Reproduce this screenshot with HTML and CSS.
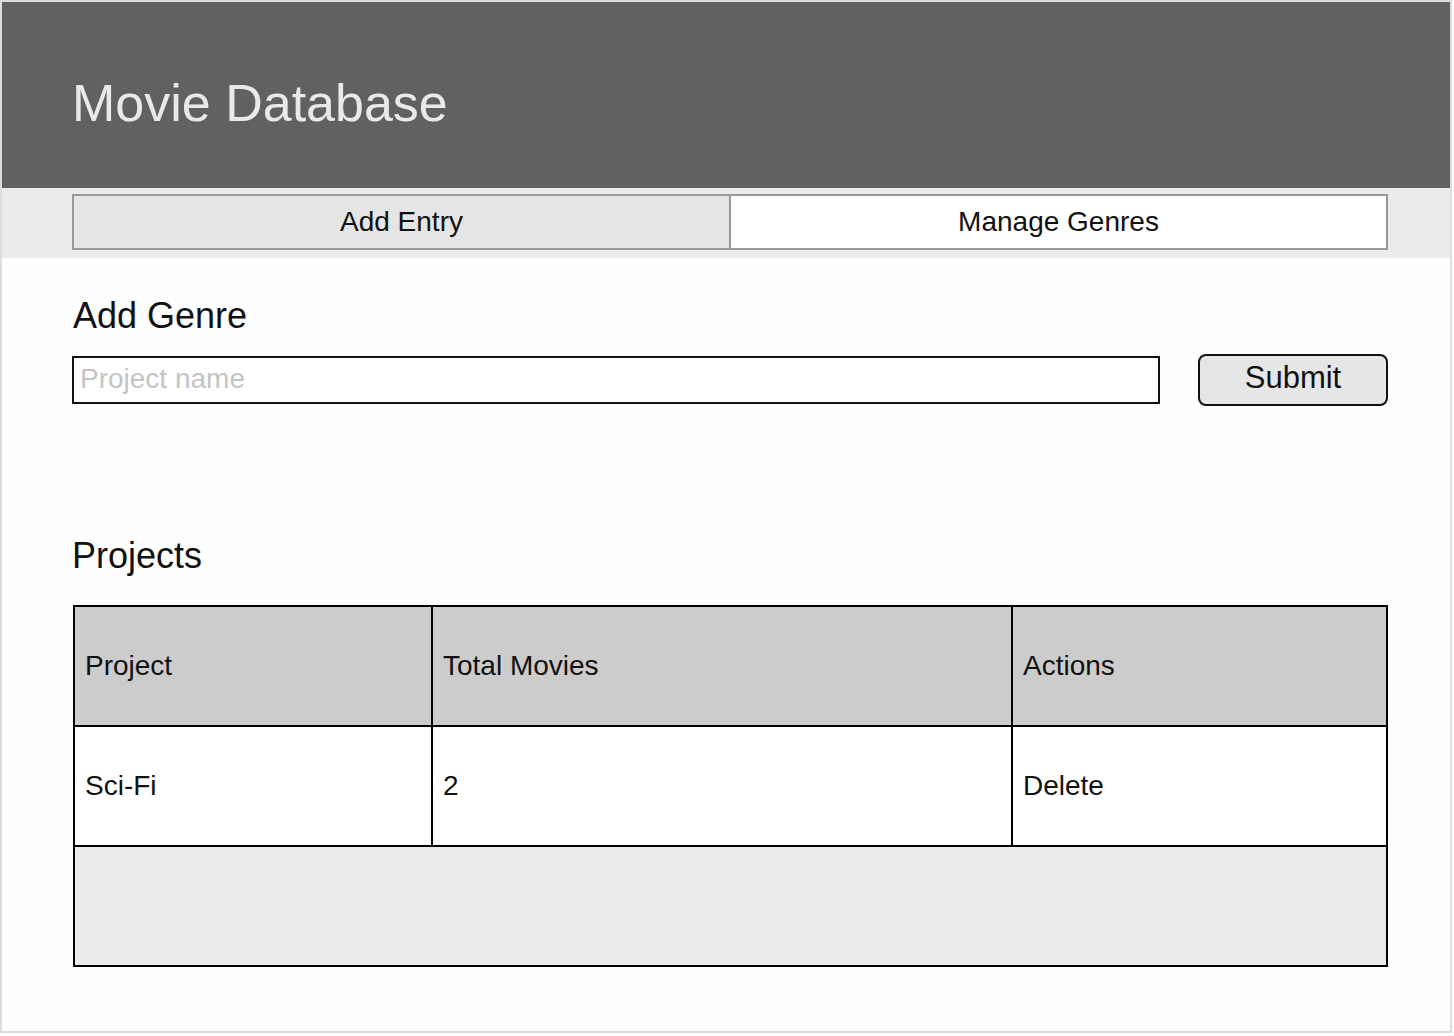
FILE: index.html
```html
<!DOCTYPE html>
<html lang="en">
<head>
<meta charset="utf-8">
<title>Movie Database</title>
<link rel="stylesheet" href="styles.css">
</head>
<body>
<div class="frame">
  <header class="header">
    <h1 class="title">Movie Database</h1>
  </header>
  <nav class="nav">
    <div class="tabs">
      <div class="tab tab-inactive">Add Entry</div>
      <div class="tab tab-active">Manage Genres</div>
    </div>
  </nav>
  <main class="content">
    <h2 class="section-title first">Add Genre</h2>
    <div class="form-row">
      <input class="text-input" type="text" placeholder="Project name">
      <button class="submit-btn" type="button">Submit</button>
    </div>
    <h2 class="section-title second">Projects</h2>
    <table class="grid">
      <colgroup>
        <col class="c1">
        <col class="c2">
        <col class="c3">
      </colgroup>
      <thead>
        <tr class="head-row">
          <th class="cell">Project</th>
          <th class="cell">Total Movies</th>
          <th class="cell last">Actions</th>
        </tr>
      </thead>
      <tbody>
        <tr class="body-row">
          <td class="cell">Sci-Fi</td>
          <td class="cell">2</td>
          <td class="cell last">Delete</td>
        </tr>
        <tr class="empty-row">
          <td class="empty-cell" colspan="3"></td>
        </tr>
      </tbody>
    </table>
  </main>
</div>
</body>
</html>
```

FILE: styles.css
```css
html, body {
  margin: 0;
  padding: 0;
  background: #ffffff;
}

body {
  font-family: "Liberation Sans", Arial, Helvetica, sans-serif;
  color: #111111;
}

.frame {
  width: 1452px;
  height: 1033px;
  box-sizing: border-box;
  border: 2px solid #dddddd;
  background: #fefefe;
}

.header {
  height: 186px;
  box-sizing: border-box;
  background: #616161;
  padding: 75px 0 0 70px;
}

.title {
  margin: 0;
  font-size: 52px;
  line-height: 52px;
  font-weight: normal;
  color: #e9e9e9;
}

.nav {
  height: 70px;
  box-sizing: border-box;
  background: #ebebeb;
  padding: 6px 62px 0 70px;
}

.tabs {
  display: flex;
  height: 56px;
  box-sizing: border-box;
  border: 2px solid #999999;
}

.tab {
  flex: 1;
  text-align: center;
  font-size: 28px;
  line-height: 52px;
  color: #111111;
}

.tab-inactive {
  background: #e5e5e5;
  border-right: 2px solid #999999;
}

.tab-active {
  background: #ffffff;
}

.content {
  padding: 0 62px 0 70px;
}

.section-title {
  margin: 0;
  font-size: 36px;
  line-height: 40px;
  font-weight: normal;
  color: #111111;
}

.section-title.first {
  margin-top: 38px;
  padding-left: 1px;
}

.section-title.second {
  margin-top: 130px;
  padding-left: 0;
}

.form-row {
  display: flex;
  align-items: center;
  gap: 38px;
  margin-top: 18px;
}

.text-input {
  flex: 1;
  height: 48px;
  box-sizing: border-box;
  margin: 0;
  border: 2px solid #111111;
  border-radius: 0;
  padding: 0 6px 2px 6px;
  font-family: "Liberation Sans", Arial, Helvetica, sans-serif;
  font-size: 28px;
  color: #111111;
  background: #ffffff;
  outline: none;
}

.text-input::placeholder {
  color: #c4c4c4;
}

.submit-btn {
  width: 190px;
  height: 52px;
  box-sizing: border-box;
  margin: 0;
  border: 2px solid #111111;
  border-radius: 8px;
  background: #e6e6e6;
  padding: 0 0 5px 0;
  font-family: "Liberation Sans", Arial, Helvetica, sans-serif;
  font-size: 31px;
  color: #111111;
}

.grid {
  margin-top: 29px;
  margin-left: 1px;
  width: 1315px;
  table-layout: fixed;
  border-collapse: separate;
  border-spacing: 0;
  border: 2px solid #000000;
}

.c1 { width: 358px; }
.c2 { width: 580px; }
.c3 { width: 373px; }

.cell {
  height: 118px;
  box-sizing: border-box;
  padding: 0 0 0 10px;
  text-align: left;
  vertical-align: middle;
  font-size: 28px;
  font-weight: normal;
  color: #111111;
  border-right: 2px solid #000000;
  border-bottom: 2px solid #000000;
}

.cell.last {
  border-right: none;
}

.head-row .cell {
  height: 120px;
  background: #cccccc;
}

.body-row .cell {
  height: 120px;
  background: #ffffff;
}

.empty-cell {
  height: 118px;
  padding: 0;
  background: #ebebeb;
}
```
